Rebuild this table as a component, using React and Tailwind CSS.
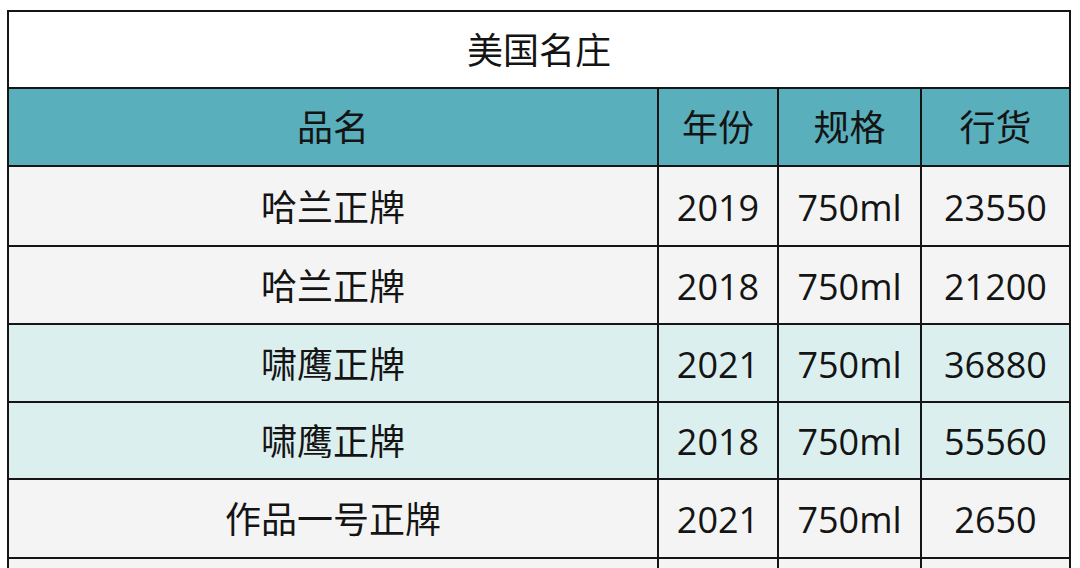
import React from 'react';

const rows = [
  { name: '哈兰正牌', year: '2019', size: '750ml', price: '23550', tint: false },
  { name: '哈兰正牌', year: '2018', size: '750ml', price: '21200', tint: false },
  { name: '啸鹰正牌', year: '2021', size: '750ml', price: '36880', tint: true },
  { name: '啸鹰正牌', year: '2018', size: '750ml', price: '55560', tint: true },
  { name: '作品一号正牌', year: '2021', size: '750ml', price: '2650', tint: false },
];

const heights = ['h-[78px]', 'h-[76px]', 'h-[76px]', 'h-[75px]', 'h-[77px]'];

export default function App() {
  return (
    <div
      className="w-[1080px] h-[568px] overflow-hidden bg-white pt-[10px] pl-[7px] text-[#141414]"
      style={{ fontFamily: '"Open Sans", "Noto Sans CJK SC", sans-serif' }}
    >
      <div className="w-[1064px] bg-[#151515] p-[2px] grid grid-cols-[648px_118px_141px_147px] gap-[2px] text-[36px] leading-none">
        {/* title */}
        <div className="col-span-4 h-[75px] bg-white flex items-center justify-center pt-[2px]">美国名庄</div>

        {/* header */}
        {['品名', '年份', '规格', '行货'].map((h) => (
          <div key={h} className="h-[76px] bg-[#5aafbc] flex items-center justify-center pt-[2px]">
            {h}
          </div>
        ))}

        {rows.map((r, i) => {
          const bg = r.tint ? 'bg-[#dcefef]' : 'bg-[#f4f4f4]';
          const cell = `${heights[i]} ${bg} flex items-center justify-center pt-[3px]`;
          return (
            <React.Fragment key={i}>
              <div className={cell}>{r.name}</div>
              <div className={cell}>{r.year}</div>
              <div className={cell}>{r.size}</div>
              <div className={cell}>{r.price}</div>
            </React.Fragment>
          );
        })}

        {[0, 1, 2, 3].map((k) => (
          <div key={k} className="h-[77px] bg-[#f4f4f4]" />
        ))}
      </div>
    </div>
  );
}
